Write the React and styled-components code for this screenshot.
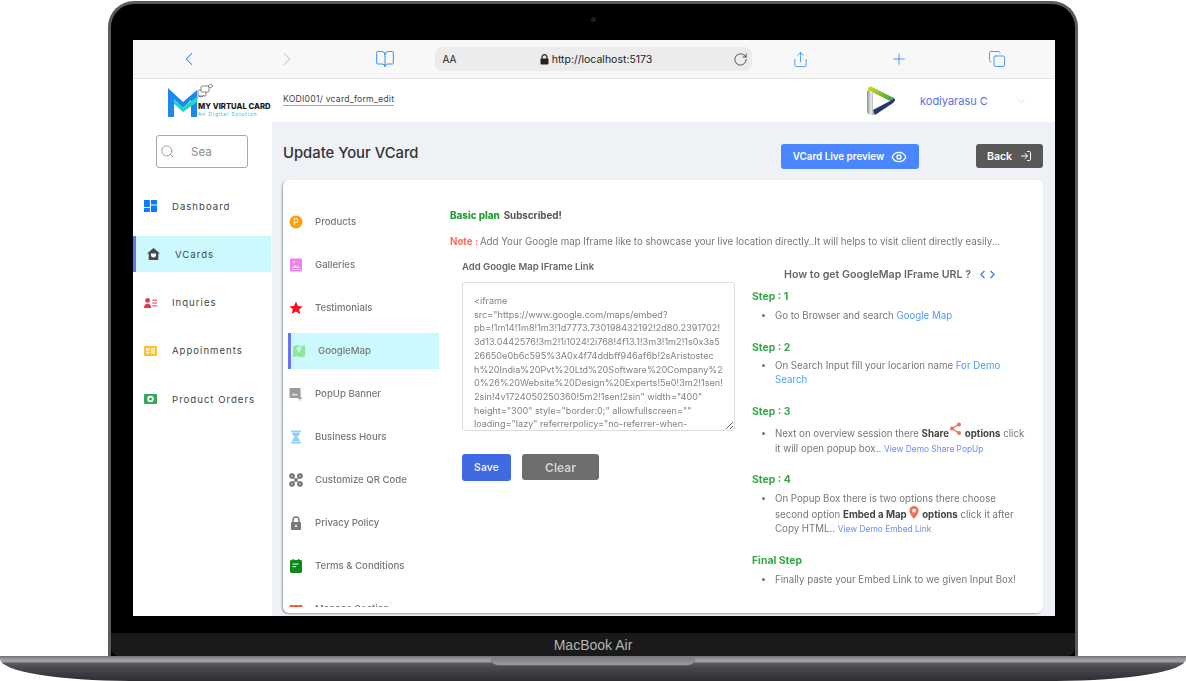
import React from 'react';
import styled, { createGlobalStyle } from 'styled-components';
import {
  ChevronLeft, ChevronRight, ChevronDown, BookOpen, RotateCw, Share, Plus, Copy, Search, Eye, LogIn,
} from 'lucide-react';

const GlobalStyle = createGlobalStyle`
  html, body { margin: 0; padding: 0; background: #fff; }
  body { font-family: Inter, "Open Sans", sans-serif; }
  * { box-sizing: border-box; }
`;

const Page = styled.div`
  width: 1186px;
  height: 681px;
  overflow: hidden;
  display: flex;
  flex-direction: column;
  align-items: center;
  background: #fff;
`;

const Lid = styled.div`
  width: 970px;
  height: 655px;
  margin-top: 1px;
  background: #000;
  border: 3px solid #5a5b60;
  border-bottom: 0;
  border-radius: 26px 26px 0 0;
  display: flex;
  flex-direction: column;
`;

const Bezel = styled.div`
  height: 36px;
  flex: none;
  display: flex;
  align-items: center;
  justify-content: center;
  padding-bottom: 6px;
`;

const Camera = styled.span`
  width: 5px;
  height: 5px;
  border-radius: 50%;
  background: #1c2026;
`;

const ScreenRow = styled.div`
  padding: 0 20px 0 22px;
  flex: none;
`;

const Screen = styled.div`
  width: 922px;
  height: 576px;
  background: #fff;
  overflow: hidden;
  display: flex;
  flex-direction: column;
`;

const Chin = styled.div`
  height: 17px;
  flex: none;
`;

const NameBar = styled.div`
  flex: 1;
  background: #1a1a1a;
  border-radius: 0 0 8px 8px;
  display: flex;
  align-items: center;
  justify-content: center;
  color: #b5b5b5;
  font-family: "Liberation Sans", sans-serif;
  font-size: 14px;
`;

const Base = styled.div`
  width: 1186px;
  height: 25px;
  flex: none;
  display: flex;
  justify-content: center;
  border-radius: 0 0 130px 130px / 0 0 22px 22px;
  background: linear-gradient(180deg, #6f7075 0, #9a9ba0 3px, #a0a1a6 6px, #5a5b61 7px, #47484e 12px, #2c2d33 100%);
`;

const Notch = styled.div`
  width: 204px;
  height: 10px;
  border-radius: 0 0 7px 7px;
  background: linear-gradient(180deg, #77787d, #9b9ca1);
  border-bottom: 1px solid #606166;
`;

/* browser toolbar */
const Toolbar = styled.div`
  height: 39px;
  flex: none;
  display: flex;
  align-items: center;
  padding: 0 9px 0 7px;
  background: #f8f8f9;
  border-bottom: 1px solid #e4e4e4;
  color: #2a86f5;
`;

const ToolSlot = styled.div`
  width: 98.5px;
  display: flex;
  justify-content: center;
  color: ${(p) => (p.$muted ? '#c4c6ca' : 'inherit')};
`;

const AddressBar = styled.div`
  width: 317px;
  height: 24px;
  flex: none;
  border-radius: 7px;
  background: #ececed;
  display: flex;
  align-items: center;
  padding: 0 4px 0 8px;
  color: #222;
  font-size: 10px;
`;

const Url = styled.div`
  flex: 1;
  display: flex;
  align-items: center;
  justify-content: center;
  gap: 3px;
  font-size: 10.5px;
  padding-left: 3px;
`;

/* app header */
const Header = styled.div`
  height: 43px;
  flex: none;
  display: flex;
  align-items: center;
  padding-left: 35px;
  background: #fff;
`;

const LogoBox = styled.div`
  width: 115px;
  height: 43px;
  flex: none;
  display: flex;
  align-items: flex-end;
  padding-bottom: 4px;
`;

const BrandText = styled.div`
  margin-left: -18px;
  padding-bottom: 1px;
`;

const BrandName = styled.div`
  font-size: 7.7px;
  line-height: 9px;
  font-weight: 800;
  color: #1a1a1a;
  white-space: nowrap;
`;

const BrandSub = styled.div`
  font-size: 5px;
  line-height: 6px;
  color: #28b8d8;
  letter-spacing: 0.85px;
  white-space: nowrap;
`;

const Crumb = styled.div`
  font-size: 8.7px;
  line-height: 12px;
  color: #444;
  white-space: nowrap;
  letter-spacing: 0.2px;
  border-bottom: 1px solid #8ea0f5;
  margin-bottom: 3px;
`;

const HeaderRight = styled.div`
  margin-left: auto;
  display: flex;
  align-items: center;
`;

const UserName = styled.span`
  margin: 1px 24px 0 24px;
  width: 70px;
  font-size: 11px;
  color: #5a6ee8;
  white-space: nowrap;
`;

const UserCaret = styled.span`
  display: flex;
  margin-right: 27px;
  color: #dcdff5;
`;

/* body */
const Body = styled.div`
  flex: 1;
  min-height: 0;
  display: flex;
`;

const Sidebar = styled.aside`
  width: 139px;
  flex: none;
  background: #fff;
  padding-top: 13px;
`;

const SearchBox = styled.div`
  width: 92px;
  height: 33px;
  margin: 0 0 20px 23px;
  border: 1px solid #aaa;
  border-radius: 3px;
  display: flex;
  align-items: center;
  padding-left: 3px;
  color: #999;
  font-size: 11.5px;
  span { margin-left: 16px; color: #8a8a8a; }
`;

const Nav = styled.nav`
  display: flex;
  flex-direction: column;
  gap: 12.3px;
`;

const NavItem = styled.div`
  height: 36px;
  display: flex;
  align-items: center;
  gap: 15px;
  padding-left: 11px;
  font-size: 9.6px;
  letter-spacing: 1px;
  color: #444;
  white-space: nowrap;
  background: ${(p) => (p.$active ? '#ccf9fd' : 'transparent')};
  border-left: ${(p) => (p.$active ? '3px solid #6b72f0' : '0')};
  margin-right: ${(p) => (p.$active ? '1px' : '0')};
  svg { flex: none; }
`;

const Main = styled.main`
  flex: 1;
  min-width: 0;
  background: #eef1f6;
  padding: 0 12px 0 11px;
  display: flex;
  flex-direction: column;
`;

const TitleRow = styled.div`
  height: 58px;
  flex: none;
  display: flex;
  align-items: flex-start;
  padding-top: 22px;
`;

const Title = styled.h1`
  margin: 0;
  font-size: 14.8px;
  line-height: 18px;
  font-weight: 500;
  color: #333;
  white-space: nowrap;
`;

const ActionButton = styled.button`
  border: 0;
  border-radius: 3px;
  display: flex;
  align-items: center;
  justify-content: center;
  color: #fff;
  font-family: inherit;
  font-weight: 600;
  padding: 0;
  height: ${(p) => (p.$dark ? '24px' : '25px')};
  font-size: ${(p) => (p.$dark ? '10.5px' : '9.8px')};
  width: ${(p) => (p.$dark ? '67px' : '138px')};
  gap: ${(p) => (p.$dark ? '8px' : '7px')};
  margin-left: ${(p) => (p.$dark ? '57px' : 'auto')};
  background: ${(p) => (p.$dark ? '#595959' : '#4a86ff')};
`;

const Card = styled.section`
  height: 433px;
  flex: none;
  background: #fff;
  border-radius: 6px;
  box-shadow: -1px 1px 2px rgba(0, 0, 0, 0.35);
  display: flex;
  padding-left: 5px;
  overflow: hidden;
`;

const Tabs = styled.div`
  width: 151px;
  flex: none;
  height: 427px;
  overflow: hidden;
  padding-top: 24px;
  display: flex;
  flex-direction: column;
  gap: 7px;
  filter: blur(0.45px);
`;

const Tab = styled.div`
  height: 36px;
  flex: none;
  display: flex;
  align-items: center;
  gap: 12px;
  padding-left: 1px;
  font-size: 9.6px;
  line-height: 12px;
  font-weight: 500;
  color: #777;
  white-space: nowrap;
  background: ${(p) => (p.$active ? '#ccf9fd' : 'transparent')};
  border-left: ${(p) => (p.$active ? '3px solid #6b72f0' : '0')};
  svg { flex: none; }
`;

const Content = styled.div`
  flex: 1;
  min-width: 0;
  padding: 30px 0 0 11px;
  filter: blur(0.45px);
`;

const PlanLine = styled.div`
  font-size: 9.8px;
  line-height: 12px;
  font-weight: 700;
  color: #555;
  white-space: nowrap;
  b { color: #1f9d2f; font-weight: 800; margin-right: 4px; }
`;

const Note = styled.div`
  margin-top: 14px;
  font-size: 9.72px;
  line-height: 12px;
  color: #777;
  white-space: nowrap;
  b { color: #ff6b5b; font-weight: 700; margin-right: -1px; }
`;

const Columns = styled.div`
  display: flex;
  margin-top: 13px;
`;

const FormCol = styled.div`
  width: 273px;
  margin-left: 12px;
  flex: none;
`;

const Label = styled.div`
  font-size: 9.55px;
  line-height: 12px;
  font-weight: 600;
  color: #666;
  white-space: nowrap;
`;

const Area = styled.textarea`
  display: block;
  width: 273px;
  height: 149px;
  margin-top: 9px;
  padding: 11px 8px 0 11px;
  border: 1px solid #ddd;
  border-radius: 3px;
  outline: 0;
  resize: vertical;
  overflow: hidden;
  font-family: inherit;
  font-size: 9.1px;
  line-height: 13.7px;
  color: #828282;
  white-space: pre;
`;

const FormButtons = styled.div`
  display: flex;
  align-items: flex-start;
  gap: 11px;
  margin-top: 23px;
`;

const FormButton = styled.button`
  border: 0;
  border-radius: 3px;
  color: ${(p) => (p.$clear ? '#d5d5d5' : '#e8ecff')};
  font-family: inherit;
  font-weight: 600;
  padding: 0;
  font-size: ${(p) => (p.$clear ? '12px' : '10.5px')};
  width: ${(p) => (p.$clear ? '77px' : '49px')};
  height: ${(p) => (p.$clear ? '26px' : '27px')};
  background: ${(p) => (p.$clear ? '#6e6e6e' : '#4169e1')};
`;

const GuideCol = styled.div`
  margin-left: 17px;
  flex: 1;
  min-width: 0;
  padding-top: 6px;
`;

const GuideTitle = styled.div`
  display: flex;
  align-items: center;
  gap: 5px;
  margin-left: 32px;
  height: 14px;
  font-size: 10.65px;
  font-weight: 600;
  color: #666;
  white-space: nowrap;
`;

const TitleArrows = styled.span`
  display: flex;
  color: #4a6fe8;
  svg + svg { margin-left: -3px; }
`;

const Step = styled.div`
  margin-top: ${(p) => p.$top || 0}px;
  h4 {
    margin: 0;
    font-size: 10.4px;
    line-height: 16px;
    font-weight: 700;
    color: #35a845;
  }
`;

const StepList = styled.ul`
  margin: ${(p) => p.$gap || 4}px 0 0;
  padding: 0 0 0 23px;
  font-size: 9.7px;
  line-height: ${(p) => p.$line || 14}px;
  color: #777;
  white-space: nowrap;
  b { color: #444; font-weight: 700; }
`;

const Link = styled.span`
  color: ${(p) => (p.$small ? '#6b8cf5' : '#4a9bff')};
  font-size: ${(p) => (p.$small ? '8.4px' : 'inherit')};
`;

const iframeText = `<iframe
src="https://www.google.com/maps/embed?
pb=!1m14!1m8!1m3!1d7773.730198432192!2d80.2391702!
3d13.0442576!3m2!1i1024!2i768!4f13.1!3m3!1m2!1s0x3a5
26650e0b6c595%3A0x4f74ddbff946af6b!2sAristostec
h%20India%20Pvt%20Ltd%20Software%20Company%2
0%26%20Website%20Design%20Experts!5e0!3m2!1sen!
2sin!4v1724050250360!5m2!1sen!2sin" width="400"
height="300" style="border:0;" allowfullscreen=""
loading="lazy" referrerpolicy="no-referrer-when-
downgrade"></iframe>`;

const Logo = () => (
  <svg width="48" height="35" viewBox="0 0 48 35">
    <path d="M0 34V5l15 14L29 7v27h-6V17l-8 8-9-9v18z" fill="#1e88f0" />
    <path d="M6 16l9 8 15-11-1 6-14 10-9-8z" fill="#22d6c8" />
    <g fill="#fff" stroke="#555" strokeWidth="0.7">
      <rect x="30" y="7" width="8" height="6" rx="1" />
      <rect x="33" y="3" width="8" height="6" rx="1" />
      <path d="M40 3l3-2 2 2-3 2z" />
      <path d="M30 13l4 1 2-2" fill="none" />
    </g>
  </svg>
);

const Avatar = () => (
  <svg width="30" height="32" viewBox="0 0 30 32">
    <defs>
      <linearGradient id="av-top" x1="0" x2="1" y1="0" y2="0.5">
        <stop offset="0" stopColor="#d6d81e" />
        <stop offset="1" stopColor="#4fa83d" />
      </linearGradient>
      <linearGradient id="av-left" x1="0" x2="1" y1="0" y2="0">
        <stop offset="0" stopColor="#8a8d90" />
        <stop offset="0.5" stopColor="#eeeeee" />
        <stop offset="1" stopColor="#777a7d" />
      </linearGradient>
    </defs>
    <path d="M2 4c0-2 2-3 4-2l22 11-4 3L8 8H2z" fill="url(#av-top)" />
    <path d="M1 6h6v19l2 4c-3 2-7 1-8-2z" fill="url(#av-left)" />
    <path d="M28 13c2 2 1 3-1 5L9 30l-2-5 17-9z" fill="#26376f" />
  </svg>
);

const AddressLock = () => (
  <svg width="9" height="11" viewBox="0 0 9 11">
    <path d="M2 5V3.2a2.5 2.5 0 0 1 5 0V5" fill="none" stroke="#222" strokeWidth="1.2" />
    <rect x="0.5" y="4.6" width="8" height="6" rx="1" fill="#222" />
  </svg>
);

const DashIcon = () => (
  <svg width="13" height="12" viewBox="0 0 12 12" preserveAspectRatio="none" fill="#0a7cff">
    <rect x="0" y="0" width="5.4" height="7" />
    <rect x="6.4" y="0" width="5.6" height="4.5" />
    <rect x="0" y="8" width="5.4" height="4" />
    <rect x="6.4" y="5.5" width="5.6" height="6.5" />
  </svg>
);

const HomeIcon = () => (
  <svg width="13" height="12" viewBox="0 0 13 12">
    <path d="M6.5 0L13 5.6h-1.7V12H1.7V5.6H0z" fill="#4a4a4a" />
    <path d="M4 5.5h5v2.2c-.4 1-1.4 1.7-2.5 1.7S4.4 8.7 4 7.7z" fill="#fff" />
  </svg>
);

const InquiryIcon = () => (
  <svg width="13" height="10" viewBox="0 0 13 10" fill="#dc3c50">
    <circle cx="3.6" cy="2.4" r="2.4" />
    <path d="M0 10c0-3 1.4-4.2 3.6-4.2S7.2 7 7.2 10z" />
    <rect x="8.4" y="1.6" width="4.6" height="1.3" opacity=".8" />
    <rect x="8.4" y="4.4" width="4.6" height="1.3" opacity=".8" />
    <rect x="8.4" y="7.2" width="4.6" height="1.3" opacity=".8" />
  </svg>
);

const ApptIcon = () => (
  <svg width="13" height="10" viewBox="0 0 13 10">
    <rect width="13" height="10" rx="1.2" fill="#fdbe2d" />
    <rect x="1.8" y="2.2" width="3.8" height="2.4" fill="#fff" />
    <rect x="1.8" y="5.8" width="3.8" height="1.4" fill="#fff" />
    <rect x="7" y="2.2" width="4.2" height="1.2" fill="#fff" />
    <rect x="7" y="4.4" width="4.2" height="1.2" fill="#fff" />
    <rect x="7" y="6.4" width="4.2" height="1.2" fill="#fff" />
  </svg>
);

const OrderIcon = () => (
  <svg width="13" height="10" viewBox="0 0 13 10">
    <rect width="13" height="10" rx="0.8" fill="#35a95a" />
    <circle cx="6.5" cy="5" r="3.2" fill="#fff" />
    <circle cx="6.5" cy="5" r="1.6" fill="#35a95a" />
  </svg>
);

const ProductIcon = () => (
  <svg width="14" height="14" viewBox="0 0 14 14">
    <circle cx="7" cy="7" r="6.5" fill="#fb9f0e" />
    <text x="7" y="10" textAnchor="middle" fontSize="8.5" fontWeight="600" fill="#fde2b0" fontFamily="Inter, sans-serif">P</text>
  </svg>
);

const GalleryIcon = () => (
  <svg width="14" height="14" viewBox="0 0 14 14">
    <rect x="1" y="0.5" width="12" height="13" rx="1" fill="#ee82e8" />
    <circle cx="5" cy="4" r="1" fill="#fbd6f8" />
    <path d="M3 10l3-3 2 1.5 1.2-1L11 10z" fill="#fbd6f8" />
    <rect x="3" y="11" width="8" height="1" fill="#fbd6f8" />
  </svg>
);

const StarIcon = () => (
  <svg width="14" height="14" viewBox="0 0 14 14">
    <path d="M7 .5l2 4.4 4.8.5-3.6 3.2 1 4.7L7 10.4 2.8 12.8l1-4.7L.2 5.4 5 4.9z" fill="#f01220" />
  </svg>
);

const MapIcon = () => (
  <svg width="14" height="14" viewBox="0 0 14 14">
    <path d="M1 2.5l4-1.5 4 1.5L13 1v11l-4 1.5L5 12l-4 1.5z" fill="#8fe69a" />
    <path d="M5 3.5c-1 1 .5 3 2 5 1.5-2 2.6-3.6 1.8-5C8 2.5 6 2.5 5 3.5z" fill="#ccf9fd" />
  </svg>
);

const BannerIcon = () => (
  <svg width="14" height="14" viewBox="0 0 14 14" fill="#9a9a9a">
    <rect x="0.5" y="1" width="11" height="10" rx="1" />
    <path d="M2.5 8.5l2.2-2.5 1.6 1.5 1-1 2 2z" fill="#e4e4e4" />
    <rect x="10.5" y="9" width="1" height="4.5" />
    <rect x="8.8" y="10.7" width="4.5" height="1" />
  </svg>
);

const HourIcon = () => (
  <svg width="14" height="14" viewBox="0 0 14 14" fill="#8ed3f5">
    <rect x="2" y="0.5" width="10" height="1.6" />
    <rect x="2" y="11.9" width="10" height="1.6" />
    <path d="M3 2.5h8c0 2-1.2 3.4-3 4.5 1.8 1.1 3 2.5 3 4.5H3c0-2 1.2-3.4 3-4.5C4.2 5.9 3 4.5 3 2.5z" />
  </svg>
);

const QrIcon = () => (
  <svg width="14" height="14" viewBox="0 0 14 14" fill="none" stroke="#6e6e6e" strokeWidth="2">
    <circle cx="3" cy="3" r="1.8" />
    <circle cx="11" cy="3" r="1.8" />
    <circle cx="3" cy="11" r="1.8" />
    <circle cx="11" cy="11" r="1.8" />
    <path d="M5 5l4 4M9 5L5 9" strokeWidth="1.6" />
  </svg>
);

const LockIcon = () => (
  <svg width="14" height="14" viewBox="0 0 14 14">
    <path d="M4 6V4a3 3 0 0 1 6 0v2" fill="none" stroke="#7a7a7a" strokeWidth="1.5" />
    <rect x="2" y="6" width="10" height="8" rx="1" fill="#7a7a7a" />
    <circle cx="7" cy="10" r="1.2" fill="#e4e4e4" />
  </svg>
);

const TermsIcon = () => (
  <svg width="14" height="14" viewBox="0 0 14 14">
    <rect x="1" y="1" width="12" height="13" rx="1.4" fill="#0b8a18" />
    <rect x="3.5" y="0" width="1.4" height="2" fill="#0b8a18" />
    <rect x="9" y="0" width="1.4" height="2" fill="#0b8a18" />
    <rect x="3.5" y="4.5" width="6" height="1.2" fill="#c7efc9" />
    <rect x="3.5" y="7" width="3.6" height="1.2" fill="#c7efc9" />
  </svg>
);

const ManageIcon = () => (
  <svg width="14" height="8" viewBox="0 0 14 8">
    <rect x="0.5" y="0" width="13" height="8" rx="1" fill="#ff5a3c" />
  </svg>
);

const ShareGlyph = () => (
  <svg width="13" height="14" viewBox="0 0 13 14" style={{ verticalAlign: '1px' }}>
    <g fill="none" stroke="#f0705a" strokeWidth="1.4">
      <path d="M10 2.5L3 6.5l7 4.5" />
    </g>
    <g fill="#f0705a">
      <circle cx="10" cy="2.5" r="2" />
      <circle cx="3" cy="6.5" r="2" />
      <circle cx="10" cy="11" r="2" />
    </g>
  </svg>
);

const PinGlyph = () => (
  <svg width="10" height="13" viewBox="0 0 10 14" style={{ verticalAlign: '-1px' }}>
    <path d="M5 0a5 5 0 0 1 5 5c0 3-3 6-5 9-2-3-5-6-5-9a5 5 0 0 1 5-5z" fill="#f0705a" />
    <circle cx="5" cy="5" r="2" fill="#fff" />
  </svg>
);

const menu = [
  { label: 'Dashboard', icon: <DashIcon /> },
  { label: 'VCards', icon: <HomeIcon />, active: true },
  { label: 'Inquries', icon: <InquiryIcon /> },
  { label: 'Appoinments', icon: <ApptIcon /> },
  { label: 'Product Orders', icon: <OrderIcon /> },
];

const tabs = [
  { label: 'Products', icon: <ProductIcon /> },
  { label: 'Galleries', icon: <GalleryIcon /> },
  { label: 'Testimonials', icon: <StarIcon /> },
  { label: 'GoogleMap', icon: <MapIcon />, active: true },
  { label: 'PopUp Banner', icon: <BannerIcon /> },
  { label: 'Business Hours', icon: <HourIcon /> },
  { label: 'Customize QR Code', icon: <QrIcon /> },
  { label: 'Privacy Policy', icon: <LockIcon /> },
  { label: 'Terms & Conditions', icon: <TermsIcon /> },
  { label: 'Manage Section', icon: <ManageIcon /> },
];

export default function App() {
  return (
    <Page>
      <GlobalStyle />
      <Lid>
        <Bezel><Camera /></Bezel>
        <ScreenRow>
          <Screen>
            <Toolbar>
              <ToolSlot><ChevronLeft size={22} strokeWidth={1.1} /></ToolSlot>
              <ToolSlot $muted><ChevronRight size={22} strokeWidth={1.1} /></ToolSlot>
              <ToolSlot><BookOpen size={20} strokeWidth={1.1} /></ToolSlot>
              <AddressBar>
                <span>AA</span>
                <Url><AddressLock />http://localhost:5173</Url>
                <RotateCw size={15} strokeWidth={1.2} />
              </AddressBar>
              <ToolSlot><Share size={17} strokeWidth={1.1} /></ToolSlot>
              <ToolSlot><Plus size={18} strokeWidth={1.1} /></ToolSlot>
              <ToolSlot><Copy size={18} strokeWidth={1.1} /></ToolSlot>
            </Toolbar>
            <Header>
              <LogoBox>
                <Logo />
                <BrandText>
                  <BrandName>MY VIRTUAL CARD</BrandName>
                  <BrandSub>An Digital Solution</BrandSub>
                </BrandText>
              </LogoBox>
              <Crumb>KODI001/ vcard_form_edit</Crumb>
              <HeaderRight>
                <Avatar />
                <UserName>kodiyarasu C</UserName>
                <UserCaret><ChevronDown size={14} strokeWidth={1.6} /></UserCaret>
              </HeaderRight>
            </Header>
            <Body>
              <Sidebar>
                <SearchBox><Search size={15} strokeWidth={1.5} /><span>Sea</span></SearchBox>
                <Nav>
                  {menu.map((m) => (
                    <NavItem key={m.label} $active={m.active}>{m.icon}{m.label}</NavItem>
                  ))}
                </Nav>
              </Sidebar>
              <Main>
                <TitleRow>
                  <Title>Update Your VCard</Title>
                  <ActionButton>VCard Live preview<Eye size={16} strokeWidth={2} /></ActionButton>
                  <ActionButton $dark>Back<LogIn size={12} strokeWidth={2} /></ActionButton>
                </TitleRow>
                <Card>
                  <Tabs>
                    {tabs.map((t) => (
                      <Tab key={t.label} $active={t.active}>{t.icon}{t.label}</Tab>
                    ))}
                  </Tabs>
                  <Content>
                    <PlanLine><b>Basic plan</b>Subscribed!</PlanLine>
                    <Note><b>Note :</b> Add Your Google map Iframe like to showcase your live location directly..It will helps to visit client directly easily...</Note>
                    <Columns>
                      <FormCol>
                        <Label>Add Google Map IFrame Link</Label>
                        <Area readOnly value={iframeText} />
                        <FormButtons>
                          <FormButton>Save</FormButton>
                          <FormButton $clear>Clear</FormButton>
                        </FormButtons>
                      </FormCol>
                      <GuideCol>
                        <GuideTitle>
                          How to get GoogleMap IFrame URL ?
                          <TitleArrows><ChevronLeft size={13} strokeWidth={2.2} /><ChevronRight size={13} strokeWidth={2.2} /></TitleArrows>
                        </GuideTitle>
                        <Step $top={8}>
                          <h4>Step : 1</h4>
                          <StepList $gap={4}>
                            <li>Go to Browser and search <Link>Google Map</Link></li>
                          </StepList>
                        </Step>
                        <Step $top={17}>
                          <h4>Step : 2</h4>
                          <StepList $gap={3} $line={13.5}>
                            <li>On Search Input fill your locarion name <Link>For Demo</Link><br /><Link>Search</Link></li>
                          </StepList>
                        </Step>
                        <Step $top={18}>
                          <h4>Step : 3</h4>
                          <StepList $gap={2} $line={15}>
                            <li>Next on overview session there <b>Share</b><ShareGlyph /> <b>options</b> click<br />it will open popup box.. <Link $small>View Demo Share PopUp</Link></li>
                          </StepList>
                        </Step>
                        <Step $top={15}>
                          <h4>Step : 4</h4>
                          <StepList $gap={4} $line={14}>
                            <li>On Popup Box there is two options there choose<br />second option <b>Embed a Map</b> <PinGlyph /> <b>options</b> click it after<br />Copy HTML.. <Link $small>View Demo Embed Link</Link></li>
                          </StepList>
                        </Step>
                        <Step $top={17}>
                          <h4>Final Step</h4>
                          <StepList $gap={4}>
                            <li>Finally paste your Embed Link to we given Input Box!</li>
                          </StepList>
                        </Step>
                      </GuideCol>
                    </Columns>
                  </Content>
                </Card>
              </Main>
            </Body>
          </Screen>
        </ScreenRow>
        <Chin />
        <NameBar>MacBook Air</NameBar>
      </Lid>
      <Base><Notch /></Base>
    </Page>
  );
}
